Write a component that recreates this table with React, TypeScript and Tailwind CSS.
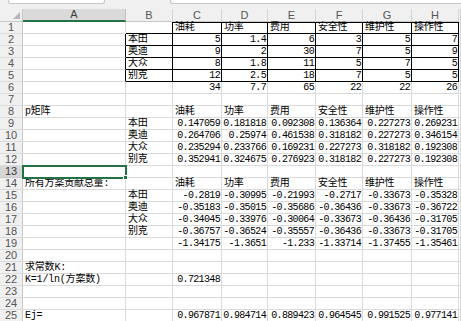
import React from 'react';

type Row = string[];

const colNames = ['A', 'B', 'C', 'D', 'E', 'F', 'G', 'H', ''];
const heads = ['油耗', '功率', '费用', '安全性', '维护性', '操作性'];

const rows: Row[] = [
  ['', '', ...heads],
  ['', '本田', '5', '1.4', '6', '3', '5', '7'],
  ['', '奥迪', '9', '2', '30', '7', '5', '9'],
  ['', '大众', '8', '1.8', '11', '5', '7', '5'],
  ['', '别克', '12', '2.5', '18', '7', '5', '5'],
  ['', '', '34', '7.7', '65', '22', '22', '26'],
  [],
  ['p矩阵', '', ...heads],
  ['', '本田', '0.147059', '0.181818', '0.092308', '0.136364', '0.227273', '0.269231'],
  ['', '奥迪', '0.264706', '0.25974', '0.461538', '0.318182', '0.227273', '0.346154'],
  ['', '大众', '0.235294', '0.233766', '0.169231', '0.227273', '0.318182', '0.192308'],
  ['', '别克', '0.352941', '0.324675', '0.276923', '0.318182', '0.227273', '0.192308'],
  [],
  ['所有方案贡献总量:', '', ...heads],
  ['', '本田', '-0.2819', '-0.30995', '-0.21993', '-0.2717', '-0.33673', '-0.35328'],
  ['', '奥迪', '-0.35183', '-0.35015', '-0.35686', '-0.36436', '-0.33673', '-0.36722'],
  ['', '大众', '-0.34045', '-0.33976', '-0.30064', '-0.33673', '-0.36436', '-0.31705'],
  ['', '别克', '-0.36757', '-0.36524', '-0.35557', '-0.36436', '-0.33673', '-0.31705'],
  ['', '', '-1.34175', '-1.3651', '-1.233', '-1.33714', '-1.37455', '-1.35461'],
  [],
  ['求常数K:'],
  ['K=1/ln(方案数)', '', '0.721348'],
  [],
  [],
  ['Ej=', '', '0.967871', '0.984714', '0.889423', '0.964545', '0.991525', '0.977141'],
];

const isNum = (s: string) => /^-?[\d.]+$/.test(s);

// black box around the source table: B2:B5 and C1:H5
const boxed = (r: number, c: number) =>
  (c === 1 && r >= 1 && r <= 4) || (c >= 2 && c <= 7 && r >= 0 && r <= 4);

const Cell: React.FC<{ value: string; r: number; c: number }> = ({ value, r, c }) => {
  const black = boxed(r, c) || (c === 0 && r >= 1 && r <= 4) || (c === 1 && r === 0);
  const blackBottom = boxed(r, c) || (c === 1 && r === 0);
  const selected = r === 12 && c === 0;
  const num = isNum(value);

  return (
    <div
      className={`relative h-[12px] border-r border-b overflow-visible whitespace-nowrap leading-[11px] text-black ${
        black ? 'border-r-black' : 'border-r-[#dadada]'
      } ${blackBottom ? 'border-b-black' : 'border-b-[#dadada]'} ${
        r === 0 && c >= 2 && c <= 7 ? 'shadow-[inset_0_1px_0_#000]' : ''
      } ${selected ? 'z-10 outline-2 outline-[#217346] -outline-offset-1' : ''}`}
    >
      {value && (
        <span
          className={`absolute bottom-0 ${
            num
              ? "right-[1px] font-['Liberation_Mono',monospace] text-[10px] tracking-[-0.65px]"
              : "left-[2px] font-['Liberation_Mono','Noto_Sans_CJK_SC',monospace] text-[10px] tracking-[-0.2px]"
          }`}
        >
          {value}
        </span>
      )}
      {selected && (
        <div className="absolute -right-[3px] -bottom-[3px] w-[5px] h-[5px] bg-[#217346] border border-white" />
      )}
    </div>
  );
};

const App: React.FC = () => {
  return (
    <div className="w-[461px] h-[321px] overflow-hidden bg-white font-['Liberation_Sans',sans-serif]">
      {/* formula bar strip */}
      <div className="flex h-[9px] bg-[#f0f0f0]">
        <div className="ml-[8px] w-[97px] h-[4px] bg-white border border-t-0 border-[#c6c6c6] rounded-b-[3px]" />
        <div className="ml-[65px] flex-1 h-[4px] bg-white border border-t-0 border-r-0 border-[#c6c6c6] rounded-bl-[3px]" />
      </div>

      <div className="grid grid-cols-[23px_103px_47px_49px_46px_48px_47px_49px_47px_1fr]">
        {/* column headers */}
        <div className="relative h-[13px] bg-[#f0f0f0] border-r border-b border-[#c8c8c8]">
          <svg className="absolute right-[2px] bottom-[2px]" width="7" height="7" viewBox="0 0 7 7">
            <polygon points="7,0 7,7 0,7" fill="#b8b8b8" />
          </svg>
        </div>
        {colNames.map((n, i) => (
          <div
            key={i}
            className={`h-[13px] flex items-center justify-center text-[11px] leading-none border-r ${
              i === 0
                ? 'bg-[#dadada] text-[#3a3a3a] border-r-[#c0c0c0] border-b-2 border-b-[#217346]'
                : 'bg-[#f0f0f0] text-[#555] border-r-[#d4d4d4] border-b border-b-[#c8c8c8]'
            }`}
          >
            {n}
          </div>
        ))}

        {rows.map((row, r) => (
          <React.Fragment key={r}>
            <div
              className={`h-[12px] flex items-center justify-center text-[11px] leading-none border-r border-b ${
                r === 12
                  ? 'bg-[#d6d6d6] text-[#3a3a3a] border-r-[#c0c0c0] border-b-[#c8c8c8]'
                  : 'bg-[#f0f0f0] text-[#555] border-r-[#c8c8c8] border-b-[#dcdcdc]'
              }`}
            >
              {r + 1}
            </div>
            {colNames.map((_, c) => (
              <Cell key={c} value={row[c] ?? ''} r={r} c={c} />
            ))}
          </React.Fragment>
        ))}
      </div>
    </div>
  );
};

export default App;
